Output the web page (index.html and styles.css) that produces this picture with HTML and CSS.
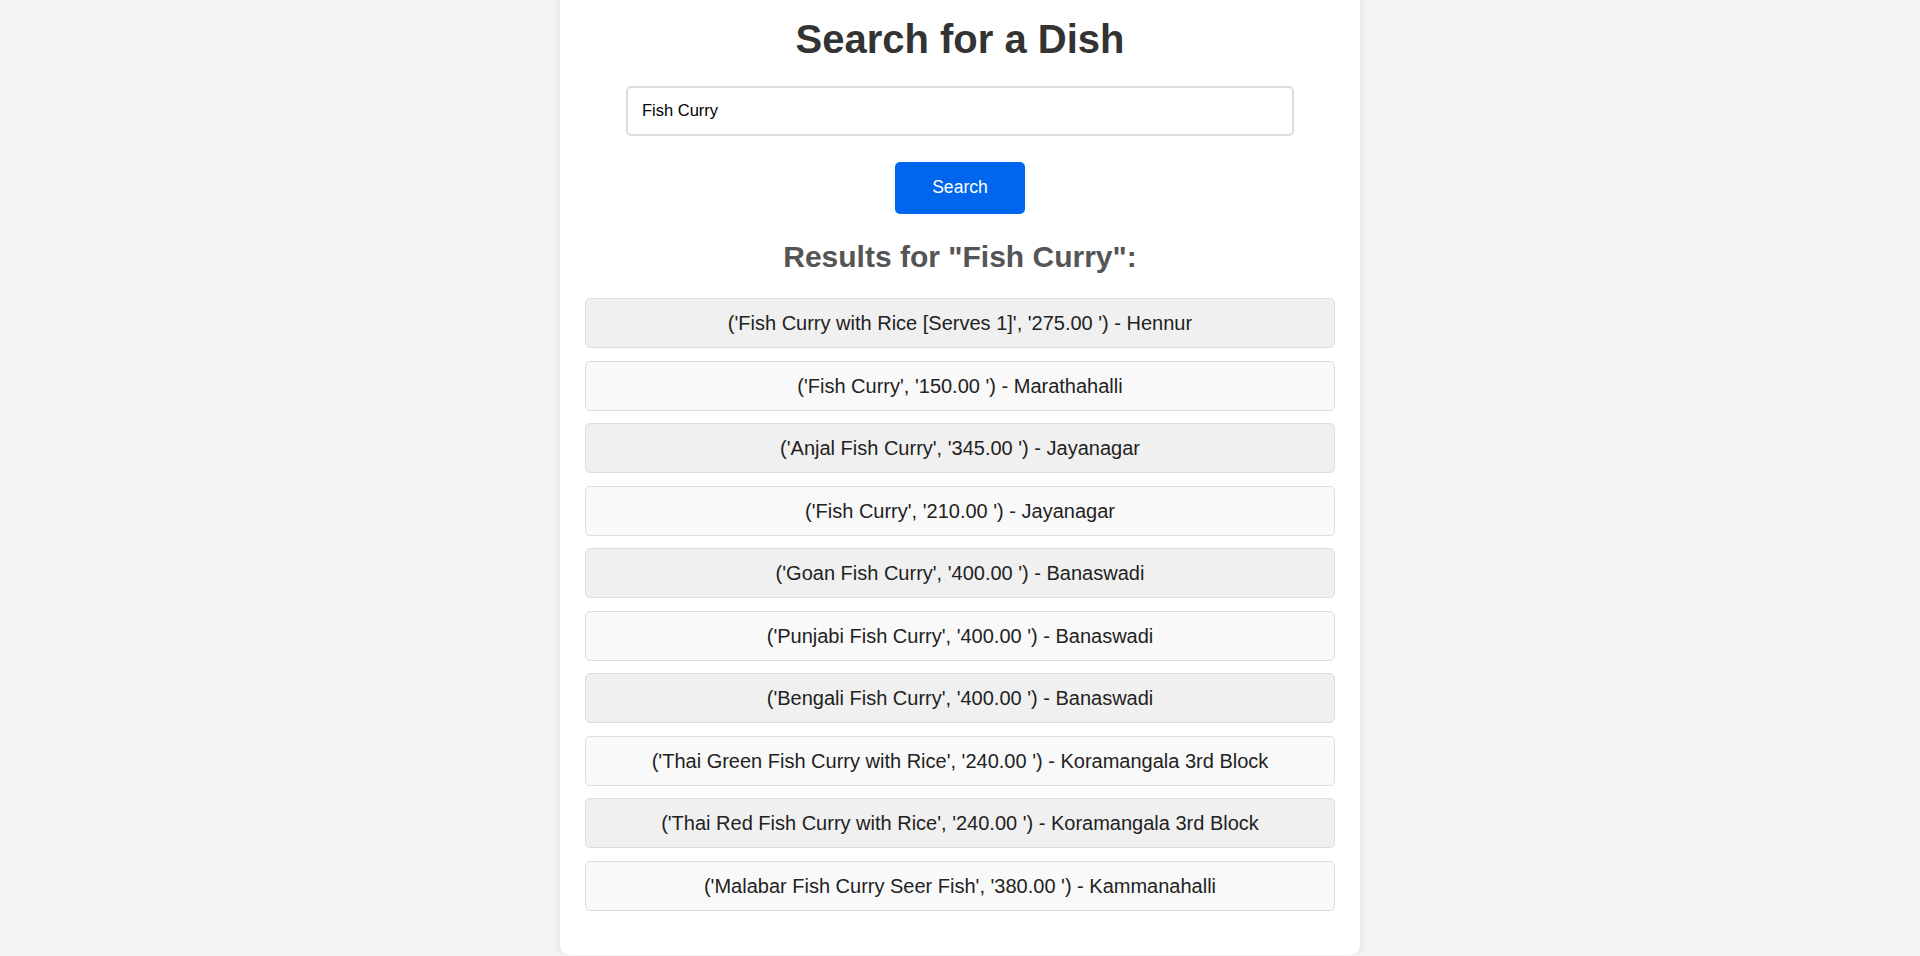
FILE: index.html
```html
<!DOCTYPE html>
<html lang="en">
<head>
<meta charset="utf-8">
<title>Search for a Dish</title>
<link rel="stylesheet" href="styles.css">
</head>
<body>
<div class="container">
  <h1 class="title">Search for a Dish</h1>
  <form class="search-form">
    <input class="search-input" type="text" value="Fish Curry">
    <button class="search-button" type="button">Search</button>
  </form>
  <h2 class="results-title">Results for "Fish Curry":</h2>
  <ul class="results">
    <li class="result">('Fish Curry with Rice [Serves 1]', '275.00 ') - Hennur</li>
    <li class="result">('Fish Curry', '150.00 ') - Marathahalli</li>
    <li class="result">('Anjal Fish Curry', '345.00 ') - Jayanagar</li>
    <li class="result">('Fish Curry', '210.00 ') - Jayanagar</li>
    <li class="result">('Goan Fish Curry', '400.00 ') - Banaswadi</li>
    <li class="result">('Punjabi Fish Curry', '400.00 ') - Banaswadi</li>
    <li class="result">('Bengali Fish Curry', '400.00 ') - Banaswadi</li>
    <li class="result">('Thai Green Fish Curry with Rice', '240.00 ') - Koramangala 3rd Block</li>
    <li class="result">('Thai Red Fish Curry with Rice', '240.00 ') - Koramangala 3rd Block</li>
    <li class="result">('Malabar Fish Curry Seer Fish', '380.00 ') - Kammanahalli</li>
  </ul>
</div>
</body>
</html>
```

FILE: styles.css
```css
html, body {
  margin: 0;
  padding: 0;
}
body {
  background: #f4f4f4;
  font-family: "Liberation Sans", Arial, sans-serif;
  overflow: hidden;
}
.container {
  box-sizing: border-box;
  width: 800px;
  margin: -8.5px auto 0;
  padding: 25px 25px 31.5px;
  background: #fff;
  border-radius: 10px;
  box-shadow: 0 0 10px rgba(0, 0, 0, 0.1);
  text-align: center;
}
.title {
  margin: 0 0 24px;
  font-size: 40px;
  font-weight: bold;
  color: #333;
}
.search-form {
  margin: 0;
  display: flex;
  flex-direction: column;
  align-items: center;
}
.search-input {
  box-sizing: border-box;
  width: 668px;
  height: 50px;
  padding: 0 14px;
  border: 2px solid #dcdcdc;
  border-radius: 5px;
  font-family: "Liberation Sans", Arial, sans-serif;
  font-size: 16.5px;
  color: #000;
  outline: none;
}
.search-button {
  margin-top: 26px;
  width: 130px;
  height: 52px;
  background: #0066ee;
  color: #fff;
  border: none;
  border-radius: 5px;
  font-family: "Liberation Sans", Arial, sans-serif;
  font-size: 17.6px;
  cursor: pointer;
}
.results-title {
  margin: 26px 0 24.5px;
  font-size: 30px;
  font-weight: bold;
  color: #555;
}
.results {
  list-style: none;
  margin: 0;
  padding: 0;
}
.result {
  box-sizing: border-box;
  height: 50px;
  line-height: 48px;
  margin-bottom: 12.5px;
  border: 1px solid #ddd;
  border-radius: 5px;
  background: #f9f9f9;
  font-size: 20px;
  color: #222;
}
.result:nth-child(odd) {
  background: #f0f0f0;
}
```
